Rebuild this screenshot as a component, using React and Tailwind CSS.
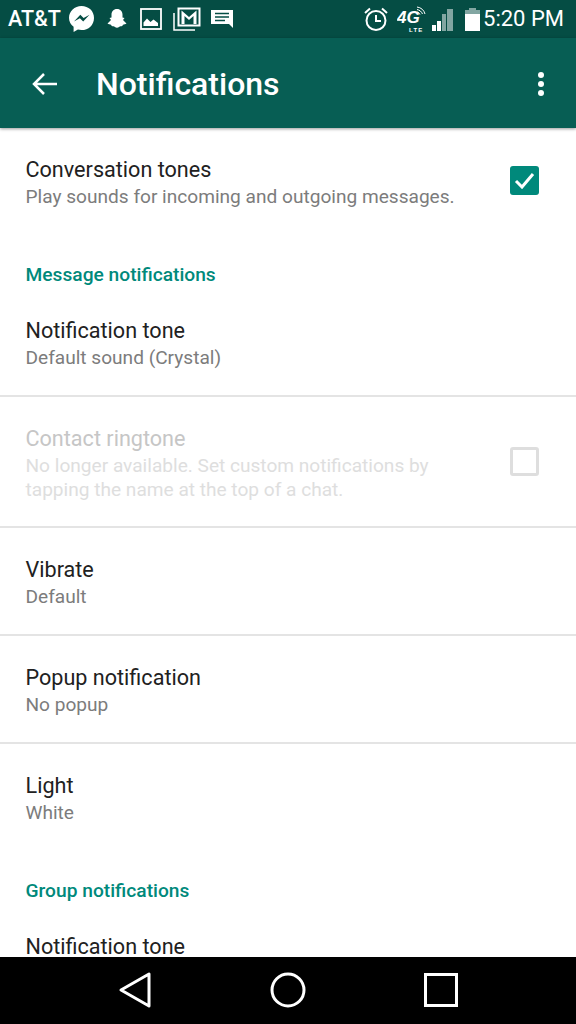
import React from 'react';

const roboto = { fontFamily: 'Roboto, sans-serif' };

function StatusBar() {
  return (
    <div className="h-[38px] bg-[#054d44] flex items-center justify-between pl-2 pr-3 text-white shrink-0">
      <div className="flex items-center">
        <span className="text-[21.500px] font-medium leading-none">AT&amp;T</span>
        <svg width="25" height="26" viewBox="0 0 25 26" className="ml-[8px]">
          <path d="M12.500 0C5.500 0 0 5.200 0 11.700c0 3.700 1.800 7 4.600 9.100V26l4.300-2.400c1.100.3 2.300.5 3.600.5 7 0 12.500-5.300 12.500-12.200S19.500 0 12.500 0z" fill="#fff" />
          <path d="M5 15.500l6.300-6.700 3.300 3.300 5.900-3.300-6.300 6.700-3.300-3.300z" fill="#054d44" />
        </svg>
        <svg width="22" height="22" viewBox="0 0 22 22" className="ml-[12px]">
          <path d="M11 1c3.500 0 5.500 2.500 5.500 5.500v3l2 .6-1.500 2 3.500 3.500c-1 .8-2.500 1-3.500 1.200-.5 1.200-1 1.500-2.500 1.500-1 0-1.800 1.500-3.500 1.500s-2.500-1.500-3.500-1.500c-1.500 0-2-.3-2.500-1.500-1-.2-2.500-.4-3.500-1.200L5 12.100l-1.500-2 2-.6v-3C5.500 3.500 7.500 1 11 1z" fill="#fff" />
        </svg>
        <svg width="22" height="22" viewBox="0 0 22 22" className="ml-[12px]">
          <rect x="1" y="1" width="20" height="20" fill="none" stroke="#fff" strokeWidth="1.800" />
          <path d="M3.500 18v-3.500l3.500-4 3.500 3.500 3-2.500 4.500 3.500V18z" fill="#fff" />
        </svg>
        <svg width="28" height="24" viewBox="0 0 28 24" className="ml-[11px]">
          <path d="M1 6v17h21" fill="none" stroke="#fff" strokeWidth="1.500" />
          <rect x="5.500" y="1.500" width="21" height="17" fill="none" stroke="#fff" strokeWidth="2" />
          <path d="M8.500 17V3.500l7.500 6.500 7.500-6.500V17h-3V9l-4.500 4-4.500-4v8z" fill="#fff" />
        </svg>
        <svg width="22" height="20" viewBox="0 0 22 20" className="ml-[10px]">
          <path d="M0 1h22v18l-4-4H0z" fill="#fff" />
          <path d="M4 4.500h14M4 8h14M4 11.500h10" stroke="#054d44" strokeWidth="1.500" />
        </svg>
      </div>
      <div className="flex items-center">
        <svg width="26" height="26" viewBox="0 0 26 26">
          <circle cx="13" cy="14.500" r="9.500" fill="none" stroke="#fff" strokeWidth="2" />
          <path d="M13 9v6h5" fill="none" stroke="#fff" strokeWidth="2" />
          <path d="M2 7l5-4.500M24 7l-5-4.500" stroke="#fff" strokeWidth="2" />
        </svg>
        <svg width="30" height="26" viewBox="0 0 30 26" className="ml-[8px]">
          <text x="0" y="17" fontFamily="Liberation Sans, sans-serif" fontSize="17" fontWeight="700" fontStyle="italic" fill="#fff">4G</text>
          <path d="M20 1c4 .5 7 3 8 7M20 3.500c2.500.5 4.500 2 5.500 4.500M20 6c1.500.2 2.500 1 3 2.500" fill="none" stroke="#fff" strokeWidth="1" />
          <text x="12" y="26" fontFamily="Liberation Sans, sans-serif" fontSize="6" fontWeight="700" letterSpacing="1.200" fill="#fff">LTE</text>
        </svg>
        <div className="flex items-end gap-[1px] h-[22px] ml-[5px] mt-[2px]">
          <div className="w-[4px] h-[6px] bg-white" />
          <div className="w-[4px] h-[10px] bg-white" />
          <div className="w-[4px] h-[17px] bg-white/50" />
          <div className="w-[6px] h-[22px] bg-white/50" />
        </div>
        <div className="ml-[12px] w-[15px] h-[23px] flex flex-col items-center">
          <div className="w-[7px] h-[2px] bg-white/50" />
          <div className="w-[15px] h-[4px] bg-white/50" />
          <div className="w-[15px] flex-1 bg-white" />
        </div>
        <span className="ml-[3px] text-[22px] leading-none">5:20 PM</span>
      </div>
    </div>
  );
}

function AppBar() {
  return (
    <div className="h-[90px] pt-[2px] bg-[#075e54] flex items-center text-white shadow-[0_1px_3px_rgba(0,0,0,0.4)] relative shrink-0">
      <svg width="28" height="24" viewBox="0 0 28 24" className="ml-[31px]">
        <path d="M26 12H3M13 2L3 12l10 10" fill="none" stroke="#fff" strokeWidth="2.500" />
      </svg>
      <span className="ml-[37px] text-[32px] font-medium leading-none">Notifications</span>
      <div className="ml-auto mr-[32px] flex flex-col gap-[3px]">
        <div className="w-[6px] h-[6px] rounded-full bg-white" />
        <div className="w-[6px] h-[6px] rounded-full bg-white" />
        <div className="w-[6px] h-[6px] rounded-full bg-white" />
      </div>
    </div>
  );
}

function Row({ title, sub, height, disabled, border, control }) {
  return (
    <div className={`flex items-center pl-[25.500px] pr-[37px] ${height} ${border ? 'border-b-2 border-[#e4e4e4]' : ''}`}>
      <div className="flex-1 pt-[4px]">
        <div className={`text-[21.600px] leading-[26px] ${disabled ? 'text-[#c6c6c6]' : 'text-[#212121]'}`}>{title}</div>
        <div className={`text-[19.100px] leading-[23.500px] mt-[2px] ${disabled ? 'text-[#dedede]' : 'text-[#7c7c7c]'}`}>{sub}</div>
      </div>
      {control}
    </div>
  );
}

function Section({ children, className }) {
  return <div className={`pl-[25.500px] text-[19.200px] font-medium leading-[24px] text-[#00897b] ${className}`}>{children}</div>;
}

export default function App() {
  return (
    <div className="w-[576px] h-[1024px] flex flex-col bg-white overflow-hidden" style={roboto}>
      <StatusBar />
      <AppBar />
      <div className="flex-1 overflow-hidden">
        <Row
          title="Conversation tones"
          sub="Play sounds for incoming and outgoing messages."
          height="h-[106px]"
          control={
            <div className="w-[29px] h-[29px] rounded-[3px] bg-[#00897b] flex items-center justify-center -mt-[1px]">
              <svg width="21" height="17" viewBox="0 0 21 17">
                <path d="M2 9l6 6L19 2" fill="none" stroke="#fff" strokeWidth="3" />
              </svg>
            </div>
          }
        />
        <Section className="mt-[29px]">Message notifications</Section>
        <Row title="Notification tone" sub="Default sound (Crystal)" height="h-[109px] mt-[1px]" border />
        <Row
          title="Contact ringtone"
          sub={<>No longer available. Set custom notifications by<br />tapping the name at the top of a chat.</>}
          height="h-[131px]"
          disabled
          border
          control={<div className="w-[29px] h-[29px] rounded-[3px] border-[3px] border-[#dedede]" />}
        />
        <Row title="Vibrate" sub="Default" height="h-[108px]" border />
        <Row title="Popup notification" sub="No popup" height="h-[108px]" border />
        <Row title="Light" sub="White" height="h-[106px]" />
        <Section className="mt-[29px]">Group notifications</Section>
        <div className="pl-[25.500px] mt-[31px] text-[21.600px] leading-[26px] text-[#212121]">Notification tone</div>
      </div>
      <div className="h-[67px] bg-black flex items-center gap-[118px] pl-[118px] pb-[2px] shrink-0 relative">
        <svg width="34" height="38" viewBox="0 0 34 38">
          <path d="M31 3v32L3 19z" fill="none" stroke="#fff" strokeWidth="3" strokeLinejoin="round" />
        </svg>
        <svg width="36" height="36" viewBox="0 0 36 36">
          <circle cx="18" cy="18" r="16" fill="none" stroke="#fff" strokeWidth="3" />
        </svg>
        <div className="w-[34px] h-[34px] border-[3px] border-white" />
      </div>
    </div>
  );
}
